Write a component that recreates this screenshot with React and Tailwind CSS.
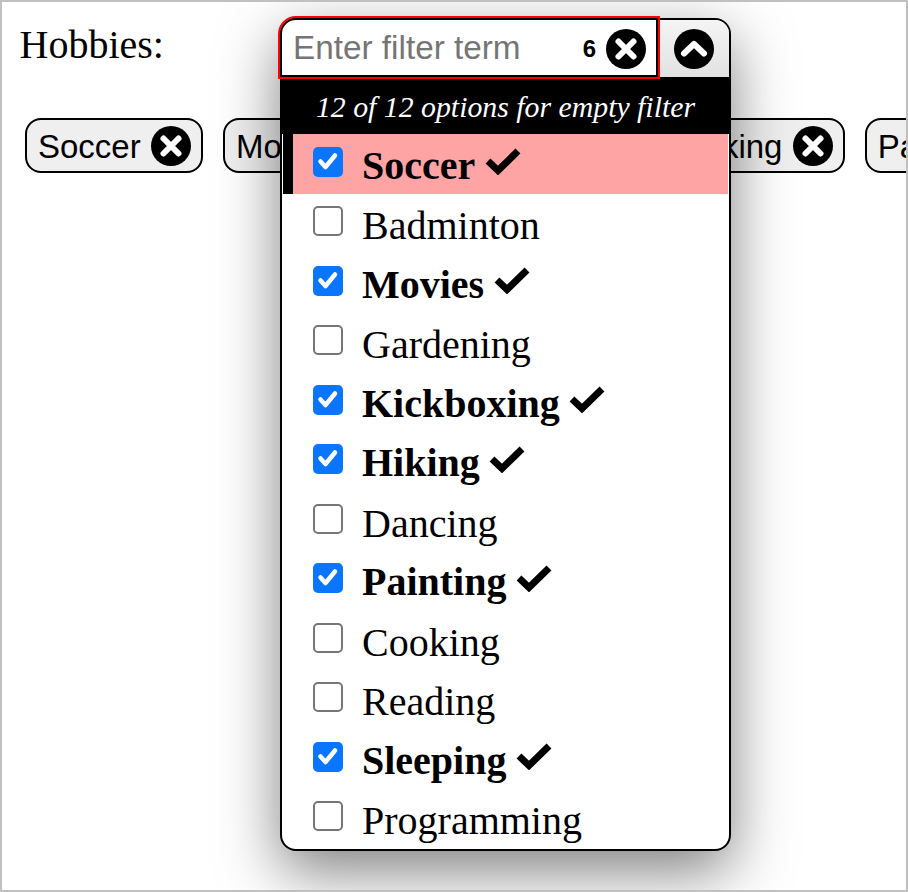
const chips = ['Soccer', 'Movies', 'Kickboxing', 'Hiking', 'Painting', 'Sleeping'];

const options = [
  { label: 'Soccer', checked: true, active: true },
  { label: 'Badminton' },
  { label: 'Movies', checked: true },
  { label: 'Gardening' },
  { label: 'Kickboxing', checked: true },
  { label: 'Hiking', checked: true },
  { label: 'Dancing' },
  { label: 'Painting', checked: true },
  { label: 'Cooking' },
  { label: 'Reading' },
  { label: 'Sleeping', checked: true },
  { label: 'Programming' },
];

function ClearIcon() {
  return (
    <svg width="40" height="40" viewBox="0 0 40 40" className="shrink-0">
      <circle cx="20" cy="20" r="20" fill="#000" />
      <path d="M12.5 12.5 27.5 27.5M27.5 12.5 12.5 27.5" stroke="#fff" strokeWidth="6" strokeLinecap="round" />
    </svg>
  );
}

function ChevronUpIcon() {
  return (
    <svg width="40" height="40" viewBox="0 0 40 40">
      <circle cx="20" cy="20" r="20" fill="#000" />
      <path d="M10 24.5 20 15 30 24.5" fill="none" stroke="#fff" strokeWidth="6" strokeLinecap="round" strokeLinejoin="round" />
    </svg>
  );
}

function TickIcon() {
  return (
    <svg width="36" height="28" viewBox="0 0 36 28" className="shrink-0">
      <path d="M3 14 13 23.5 33 4" fill="none" stroke="#000" strokeWidth="7" strokeLinejoin="miter" />
    </svg>
  );
}

function Checkbox({ checked }) {
  if (checked) {
    return (
      <span className="-mt-[4px] block h-[30px] w-[30px] shrink-0 rounded-[5px] bg-[#0a75ff]">
        <svg width="30" height="30" viewBox="0 0 30 30">
          <path d="M7.5 14.5 12.5 20 22 8.5" fill="none" stroke="#fff" strokeWidth="4.5" strokeLinecap="round" strokeLinejoin="round" />
        </svg>
      </span>
    );
  }
  return <span className="-mt-[4px] h-[30px] w-[30px] shrink-0 rounded-[5px] border-2 border-[#767676] bg-white" />;
}

export default function App() {
  return (
    <div className="relative h-[892px] w-[908px] overflow-hidden border-2 border-[#c0c0c0] bg-white font-['Liberation_Serif',serif] text-black">
      <div className="pl-[17.5px] pt-[20px] text-[40px] leading-[46px]">Hobbies:</div>

      <div className="mt-[50px] flex gap-5 pl-[23px] font-['Liberation_Sans',sans-serif] text-[33px]">
        {chips.map((chip) => (
          <div
            key={chip}
            className="flex h-[55px] shrink-0 items-center gap-[10.5px] rounded-[16px] border-2 border-black bg-[#efefef] pl-[11px] pr-[9.8px]"
          >
            <span className="pt-[2px]">{chip}</span>
            <ClearIcon />
          </div>
        ))}
      </div>

      <div className="absolute left-[278px] top-[16px] flex h-[833px] w-[451px] flex-col rounded-[16px] border-2 border-black bg-white shadow-[0_20px_60px_rgba(0,0,0,0.5)]">
        <div className="flex h-[57px] shrink-0">
          <div className="relative z-10 -ml-[2px] -mt-[2px] flex h-[59px] w-[378px] items-center rounded-tl-[16px] border-2 border-black bg-white pl-[11px] pr-[10px] pt-[3px] font-['Liberation_Sans',sans-serif] outline-2 outline-[#ff0000]">
            <span className="-mt-[3px] text-[33.3px] text-[#757575]">Enter filter term</span>
            <span className="ml-auto mr-[10px] text-[24px] font-bold">6</span>
            <ClearIcon />
          </div>
          <div className="flex flex-1 items-center justify-center rounded-tr-[14px] bg-gradient-to-b from-[#f4f4f4] to-[#e2e2e2]">
            <ChevronUpIcon />
          </div>
        </div>

        <div className="flex h-[57px] shrink-0 items-center justify-center bg-black pt-[4px] text-[29.8px] italic text-white">
          12 of 12 options for empty filter
        </div>

        <div className="flex-1 overflow-hidden rounded-b-[14px]">
          {options.map((option) => (
            <div
              key={option.label}
              className={`flex h-[59.5px] items-center text-[40px] ${
                option.active ? 'mx-[1px] border-l-[10px] border-black bg-[#ffa4a4] pl-[20px]' : 'pl-[31px]'
              } ${option.checked ? 'font-bold' : ''}`}
            >
              <Checkbox checked={option.checked} />
              <span className={`ml-[19px] ${option.checked ? 'mt-[4px]' : 'mt-[6px]'}`}>{option.label}</span>
              {option.checked && (
                <span className="-mt-[5px] ml-[9.5px]">
                  <TickIcon />
                </span>
              )}
            </div>
          ))}
        </div>
      </div>
    </div>
  );
}
